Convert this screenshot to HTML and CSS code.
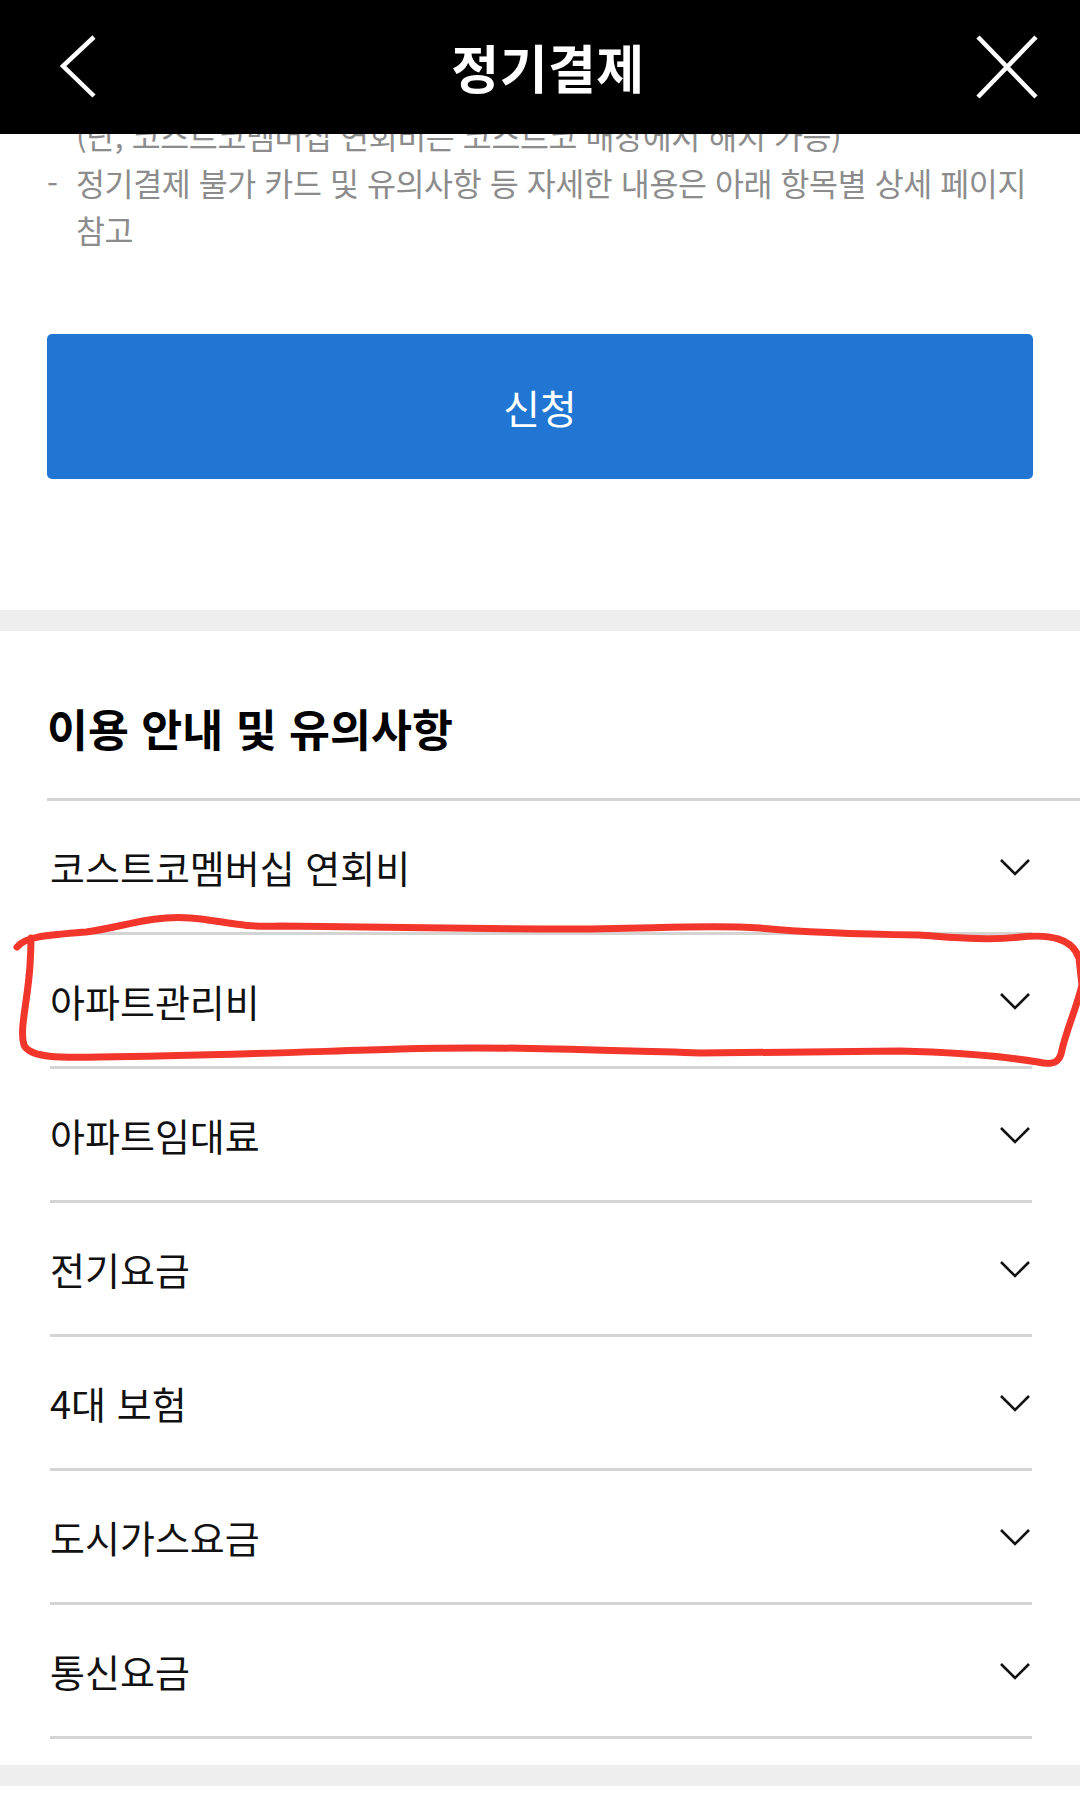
FILE: index.html
```html
<!DOCTYPE html>
<html lang="ko">
<head>
  <meta charset="UTF-8">
  <meta name="viewport" content="width=device-width, initial-scale=1.0">
  <title>정기결제</title>
  <link rel="stylesheet" href="styles.css">
</head>
<body>
  <header class="appBar">
    <button type="button" class="barButton" aria-label="뒤로">
      <svg width="40" height="66" viewBox="0 0 40 66">
        <polyline points="34,3 3,32 34,62" fill="none" stroke="#fff" stroke-width="4.5" stroke-linejoin="miter"/>
      </svg>
    </button>
    <h1 class="appTitle">정기결제</h1>
    <button type="button" class="barButton" aria-label="닫기">
      <svg width="66" height="66" viewBox="0 0 66 66">
        <path d="M4 3 L62 63 M62 3 L4 63" fill="none" stroke="#fff" stroke-width="4.5"/>
      </svg>
    </button>
  </header>

  <main>
    <ul class="notice">
      <li><span class="dash"></span><span>(단, 코스트코멤버십 연회비는 코스트코 매장에서 해지 가능)</span></li>
      <li><span class="dash">-</span><span>정기결제 불가 카드 및 유의사항 등 자세한 내용은 아래 항목별 상세 페이지 참고</span></li>
    </ul>

    <button type="button" class="applyButton">신청</button>

    <div class="band"></div>

    <section class="guide">
      <h2>이용 안내 및 유의사항</h2>
      <ul class="accordion">
        <li>코스트코멤버십 연회비<svg class="chevron" width="32" height="18" viewBox="0 0 32 18"><polyline points="2,2 16,16 30,2" fill="none" stroke="#111" stroke-width="2.6"/></svg></li>
        <li>아파트관리비<svg class="chevron" width="32" height="18" viewBox="0 0 32 18"><polyline points="2,2 16,16 30,2" fill="none" stroke="#111" stroke-width="2.6"/></svg></li>
        <li>아파트임대료<svg class="chevron" width="32" height="18" viewBox="0 0 32 18"><polyline points="2,2 16,16 30,2" fill="none" stroke="#111" stroke-width="2.6"/></svg></li>
        <li>전기요금<svg class="chevron" width="32" height="18" viewBox="0 0 32 18"><polyline points="2,2 16,16 30,2" fill="none" stroke="#111" stroke-width="2.6"/></svg></li>
        <li>4대 보험<svg class="chevron" width="32" height="18" viewBox="0 0 32 18"><polyline points="2,2 16,16 30,2" fill="none" stroke="#111" stroke-width="2.6"/></svg></li>
        <li>도시가스요금<svg class="chevron" width="32" height="18" viewBox="0 0 32 18"><polyline points="2,2 16,16 30,2" fill="none" stroke="#111" stroke-width="2.6"/></svg></li>
        <li>통신요금<svg class="chevron" width="32" height="18" viewBox="0 0 32 18"><polyline points="2,2 16,16 30,2" fill="none" stroke="#111" stroke-width="2.6"/></svg></li>
      </ul>
    </section>

    <div class="band bottomBand"></div>
  </main>

  <!-- hand drawn mark around the second row -->
  <svg class="scribble" width="1080" height="1815" viewBox="0 0 1080 1815">
    <path d="M17 947 C25 936, 50 935, 86 932 C120 928, 150 915, 190 918 C220 920, 240 928, 280 926 L540 929 C640 930, 700 924, 760 928 C800 932, 850 934, 919 935 C950 937, 985 941, 1020 937 C1050 934, 1072 938, 1079 958 L1082 985 C1076 1010, 1066 1030, 1061 1054 C1058 1064, 1050 1065, 1038 1062 C1000 1056, 950 1052, 900 1051 L700 1053 C600 1050, 500 1046, 400 1049 C300 1052, 200 1056, 100 1057 C60 1058, 30 1058, 24 1045 C19 1030, 28 1000, 30 965 C31 950, 31 942, 31 938" fill="none" stroke="#f2362b" stroke-width="7" stroke-linecap="round" stroke-linejoin="round"/>
  </svg>
</body>
</html>
```

FILE: styles.css
```css
html * {
  font-family: "Noto Sans CJK KR", "Noto Sans", sans-serif;
}

body {
  margin: 0;
  width: 1080px;
  min-height: 1815px;
  position: relative;
  overflow: hidden;
  background: #fff;
  color: #111;
}

/* top bar stays over the scrolled content */
.appBar {
  position: fixed;
  top: 0;
  left: 0;
  z-index: 2;
  width: 1080px;
  height: 134px;
  background: #000;
  display: flex;
  align-items: center;
  justify-content: space-between;
  padding: 0 40px 0 60px;
  box-sizing: border-box;
}

.barButton {
  background: none;
  border: none;
  padding: 0;
  display: flex;
}

.appTitle {
  margin: 0 0 0 22px;
  color: #fff;
  font-size: 52px;
  font-weight: 700;
  line-height: 1;
  letter-spacing: 0.5px;
}

.notice {
  list-style: none;
  margin: 0;
  padding: 112px 47px 0;
  color: #8c8c8c;
  font-size: 31.5px;
  line-height: 47px;
  letter-spacing: -0.4px;
  word-break: keep-all;
}

.notice li {
  display: flex;
}

.dash {
  flex: 0 0 29px;
}

.applyButton {
  display: block;
  width: 986px;
  height: 145px;
  margin: 81px 47px 0;
  border: none;
  border-radius: 5px;
  background: #2176d4;
  color: #fff;
  font-size: 40px;
}

.band {
  height: 21px;
  margin-top: 131px;
  background: #eeeeee;
}

.guide {
  padding: 67px 0 0 47px;
}

.guide h2 {
  margin: 0;
  padding-bottom: 40px;
  border-bottom: 3px solid #d4d4d4;
  font-size: 44.5px;
  font-weight: 700;
  line-height: 60px;
  color: #000;
}

.accordion {
  list-style: none;
  margin: 0 48px 0 3px;
  padding: 0;
}

.accordion li {
  height: 131px;
  border-bottom: 3px solid #d4d4d4;
  display: flex;
  align-items: center;
  justify-content: space-between;
  padding-right: 1px;
  font-size: 38px;
  color: #111;
}

.bottomBand {
  margin-top: 26px;
}

.scribble {
  position: absolute;
  top: 0;
  left: 0;
  z-index: 3;
  pointer-events: none;
}
```
